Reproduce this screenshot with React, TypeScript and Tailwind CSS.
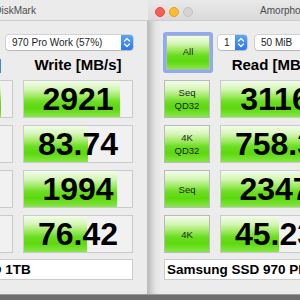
import React from "react";

type Row = { label: string[]; read: string; write: string };

const green =
  "bg-[linear-gradient(to_bottom,#f3fcec_0%,#d6f6b8_22%,#9fea62_42%,#6ade22_58%,#5dd80e_76%,#86e846_100%)]";

function frac(v: number) {
  return Math.min(1, 0.216 + 0.1946 * Math.log10(v));
}

function Stepper() {
  return (
    <div className="w-[12px] h-full rounded-r-[3px] bg-[linear-gradient(to_bottom,#5aa4fb,#2b78f2)] flex items-center justify-center">
      <svg width="8" height="11" viewBox="0 0 8 11" fill="none" stroke="white" strokeWidth="1.2" strokeLinecap="round" strokeLinejoin="round">
        <path d="M1.5 4 L4 1.5 L6.5 4" />
        <path d="M1.5 7 L4 9.5 L6.5 7" />
      </svg>
    </div>
  );
}

function Popup({ text, className }: { text: string; className: string }) {
  return (
    <div className={`h-[15px] flex items-center bg-white rounded-[3px] shadow-[0_0_0_0.5px_rgba(0,0,0,0.22),0_1px_1px_rgba(0,0,0,0.12)] ${className}`}>
      <span className="flex-1 pl-[6px] text-[10px] leading-none text-[#1c1c1c] whitespace-nowrap overflow-hidden">{text}</span>
      <Stepper />
    </div>
  );
}

function Cell({ value }: { value: string }) {
  const pct = frac(parseFloat(value)) * 100;
  return (
    <div className="relative w-[110px] h-[38px] shrink-0 border border-[#cacaca] bg-[#f1f1f1] flex items-center justify-center overflow-hidden">
      <div className={`absolute inset-y-0 left-0 ${green}`} style={{ width: `${pct}%` }} />
      <span className="relative text-[32px] font-bold leading-none text-black">{value}</span>
    </div>
  );
}

function Label({ lines }: { lines: string[] }) {
  return (
    <div className={`w-[46px] h-[38px] shrink-0 border border-[#b9b9b9] ${green} flex flex-col items-center justify-center`}>
      {lines.map((l) => (
        <span key={l} className="text-[9.5px] leading-[13px] text-[#1e1e1e]">{l}</span>
      ))}
    </div>
  );
}

function Window({
  title,
  active,
  rows,
  className,
}: {
  title: string;
  active: boolean;
  rows: Row[];
  className: string;
}) {
  return (
    <div className={`absolute top-0 w-[317px] h-[295px] flex flex-col border-b border-[#9a9a9a] ${className}`}>
      <div
        className={`relative h-[21px] shrink-0 flex items-center justify-center border-b border-[#cdcdcd] ${
          active ? "bg-[linear-gradient(to_bottom,#e9e9e9,#dadada)]" : "bg-[#ebebeb]"
        }`}
      >
        <div className="absolute left-[7px] top-[7px] flex gap-[4px]">
          <div className={`w-[10px] h-[10px] rounded-full border ${active ? "bg-[#fd5f57] border-[#e2463f]" : "bg-[#d4d4d4] border-[#c2c2c2]"}`} />
          <div className={`w-[10px] h-[10px] rounded-full border ${active ? "bg-[#febc2e] border-[#dfa023]" : "bg-[#d4d4d4] border-[#c2c2c2]"}`} />
          <div className="w-[10px] h-[10px] rounded-full border bg-[#d4d4d4] border-[#c2c2c2]" />
        </div>
        <span className="text-[10px] text-[#4c4c4c]">{title}</span>
      </div>

      <div
        className={`flex-1 pl-[16px] pt-[11px] ${
          active ? "bg-[linear-gradient(to_right,#bdbdbd,#e2e2e2_7px,#ececec_13px)]" : "bg-[#ececec] border-r border-[#bcbcbc]"
        }`}
      >
        <div className="flex">
          <div className="-ml-[1px] w-[50px] h-[41px] border-[3px] border-[#8eaaf2] rounded-[3px]">
            <div className={`w-full h-full border border-[#b5b5b5] ${green} flex items-center justify-center`}>
              <span className="text-[9.5px] text-[#1e1e1e]">All</span>
            </div>
          </div>
          <div className="ml-[5px] flex flex-col">
            <div className="mt-[3px] flex gap-[8px]">
              <Popup text="1" className="w-[29px]" />
              <Popup text="50 MiB" className="w-[60px]" />
              <Popup text="970 Pro Work (57%)" className="w-[127px]" />
            </div>
            <div className="mt-[7px] ml-[2px] flex gap-[10px]">
              <div className="w-[110px] text-center text-[15px] font-bold leading-none text-black whitespace-nowrap">Read [MB/s]</div>
              <div className="w-[110px] text-center text-[15px] font-bold leading-none text-black whitespace-nowrap">Write [MB/s]</div>
            </div>
          </div>
        </div>

        <div className="mt-[7px] flex flex-col gap-[7px]">
          {rows.map((r) => (
            <div key={r.label.join()} className="flex gap-[10px]">
              <Label lines={r.label} />
              <Cell value={r.read} />
              <Cell value={r.write} />
            </div>
          ))}
        </div>

        <div className="mt-[6px] w-[286px] h-[21px] bg-white border border-[#cbcbcb] flex items-center pl-[2px]">
          <span className="text-[13.5px] font-bold leading-none text-black whitespace-nowrap">Samsung SSD 970 PRO 1TB</span>
        </div>
      </div>
    </div>
  );
}

const leftRows: Row[] = [
  { label: ["Seq", "QD32"], read: "3290", write: "2921" },
  { label: ["4K", "QD32"], read: "612.4", write: "83.74" },
  { label: ["Seq"], read: "1650", write: "1994" },
  { label: ["4K"], read: "44.87", write: "76.42" },
];

const rightRows: Row[] = [
  { label: ["Seq", "QD32"], read: "3116", write: "2911" },
  { label: ["4K", "QD32"], read: "758.3", write: "84.12" },
  { label: ["Seq"], read: "2347", write: "1987" },
  { label: ["4K"], read: "45.23", write: "77.05" },
];

export default function App() {
  return (
    <div className="relative w-[300px] h-[300px] overflow-hidden bg-[#6e6e6e] font-['Liberation_Sans',Arial,sans-serif]">
      <Window title="AmorphousDiskMark" active={false} rows={leftRows} className="left-[-169px]" />
      <Window title="AmorphousDiskMark" active rows={rightRows} className="left-[148px]" />
    </div>
  );
}
